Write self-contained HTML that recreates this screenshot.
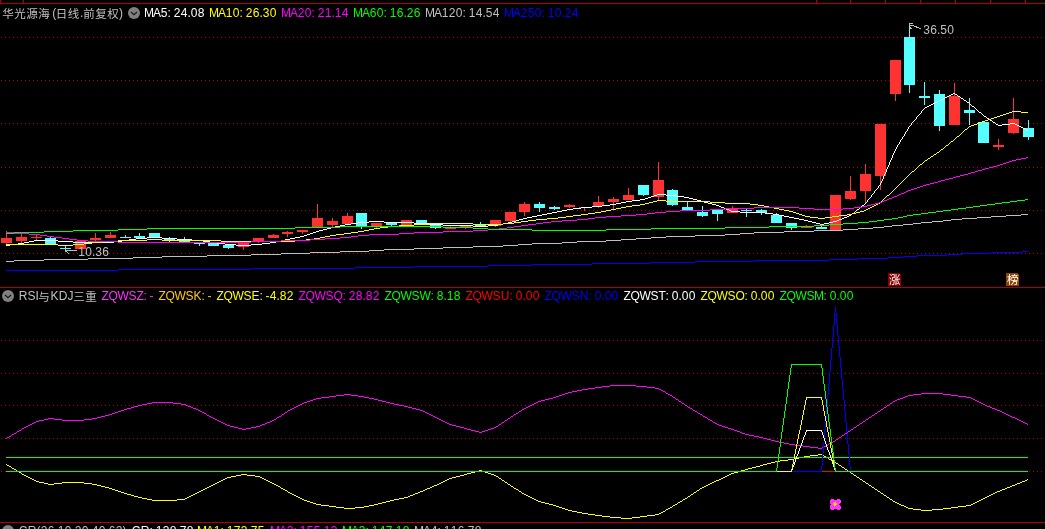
<!DOCTYPE html>
<html lang="zh-CN">
<head>
<meta charset="utf-8">
<title>华光源海 日线</title>
<style>
html,body{margin:0;padding:0;background:#000;}
body{width:1045px;height:529px;overflow:hidden;}
svg{display:block;}
.t{font-family:"Liberation Sans","Noto Sans CJK SC",sans-serif;font-size:12px;}
</style>
</head>
<body>
<svg width="1045" height="529" viewBox="0 0 1045 529" shape-rendering="crispEdges">
<rect width="1045" height="529" fill="#000"/>
<rect x="0" y="3" width="1045" height="1" fill="#b00000"/>
<rect x="0" y="0" width="1" height="3" fill="#b00000"/>
<rect x="23" y="0" width="1" height="3" fill="#b00000"/>
<rect x="816" y="0" width="1" height="3" fill="#b00000"/>
<rect x="850" y="0" width="1" height="3" fill="#b00000"/>
<rect x="885" y="0" width="1" height="3" fill="#b00000"/>
<rect x="920" y="0" width="1" height="3" fill="#b00000"/>
<rect x="955" y="0" width="1" height="3" fill="#b00000"/>
<rect x="990" y="0" width="1" height="3" fill="#b00000"/>
<rect x="1025" y="0" width="1" height="3" fill="#b00000"/>
<rect x="0" y="287" width="1045" height="1" fill="#b00000"/>
<rect x="0" y="522" width="1045" height="1" fill="#b00000"/>
<line x1="1" y1="37.5" x2="1045" y2="37.5" stroke="#b00000" stroke-width="1" stroke-dasharray="1 3"/>
<line x1="1" y1="80.5" x2="1045" y2="80.5" stroke="#b00000" stroke-width="1" stroke-dasharray="1 3"/>
<line x1="1" y1="123.5" x2="1045" y2="123.5" stroke="#b00000" stroke-width="1" stroke-dasharray="1 3"/>
<line x1="1" y1="167.5" x2="1045" y2="167.5" stroke="#b00000" stroke-width="1" stroke-dasharray="1 3"/>
<line x1="1" y1="210.5" x2="1045" y2="210.5" stroke="#b00000" stroke-width="1" stroke-dasharray="1 3"/>
<line x1="1" y1="253.5" x2="1045" y2="253.5" stroke="#b00000" stroke-width="1" stroke-dasharray="1 3"/>
<line x1="1" y1="340.5" x2="1045" y2="340.5" stroke="#b00000" stroke-width="1" stroke-dasharray="1 3"/>
<line x1="1" y1="373.5" x2="1045" y2="373.5" stroke="#b00000" stroke-width="1" stroke-dasharray="1 3"/>
<line x1="1" y1="405.5" x2="1045" y2="405.5" stroke="#b00000" stroke-width="1" stroke-dasharray="1 3"/>
<line x1="1" y1="438.5" x2="1045" y2="438.5" stroke="#b00000" stroke-width="1" stroke-dasharray="1 3"/>
<line x1="1" y1="471.5" x2="1045" y2="471.5" stroke="#b00000" stroke-width="1" stroke-dasharray="1 3"/>
<rect x="6" y="231" width="1" height="13" fill="#ff3232"/>
<rect x="1" y="238" width="11" height="5" fill="#ff3232"/>
<rect x="21" y="234" width="1" height="9" fill="#ff3232"/>
<rect x="16" y="237" width="11" height="4" fill="#ff3232"/>
<rect x="36" y="235" width="1" height="5" fill="#ff3232"/>
<rect x="31" y="237" width="11" height="1" fill="#ff3232"/>
<rect x="50" y="237" width="1" height="7" fill="#54ffff"/>
<rect x="45" y="238" width="11" height="6" fill="#54ffff"/>
<rect x="65" y="246" width="1" height="4" fill="#54ffff"/>
<rect x="60" y="248" width="11" height="1" fill="#54ffff"/>
<rect x="80" y="241" width="1" height="8" fill="#ff3232"/>
<rect x="75" y="241" width="11" height="8" fill="#ff3232"/>
<rect x="95" y="233" width="1" height="8" fill="#ff3232"/>
<rect x="90" y="238" width="11" height="2" fill="#ff3232"/>
<rect x="110" y="232" width="1" height="6" fill="#ff3232"/>
<rect x="105" y="235" width="11" height="3" fill="#ff3232"/>
<rect x="125" y="235" width="1" height="3" fill="#54ffff"/>
<rect x="120" y="237" width="11" height="1" fill="#54ffff"/>
<rect x="139" y="233" width="1" height="5" fill="#54ffff"/>
<rect x="134" y="236" width="11" height="2" fill="#54ffff"/>
<rect x="154" y="233" width="1" height="4" fill="#54ffff"/>
<rect x="149" y="233" width="11" height="4" fill="#54ffff"/>
<rect x="169" y="237" width="1" height="5" fill="#54ffff"/>
<rect x="164" y="239" width="11" height="2" fill="#54ffff"/>
<rect x="184" y="237" width="1" height="5" fill="#54ffff"/>
<rect x="179" y="240" width="11" height="2" fill="#54ffff"/>
<rect x="199" y="243" width="1" height="3" fill="#54ffff"/>
<rect x="194" y="243" width="11" height="1" fill="#54ffff"/>
<rect x="213" y="243" width="1" height="3" fill="#54ffff"/>
<rect x="208" y="243" width="11" height="3" fill="#54ffff"/>
<rect x="228" y="245" width="1" height="4" fill="#54ffff"/>
<rect x="223" y="245" width="11" height="3" fill="#54ffff"/>
<rect x="243" y="243" width="1" height="7" fill="#ff3232"/>
<rect x="238" y="243" width="11" height="4" fill="#ff3232"/>
<rect x="258" y="238" width="1" height="5" fill="#ff3232"/>
<rect x="253" y="238" width="11" height="3" fill="#ff3232"/>
<rect x="273" y="234" width="1" height="4" fill="#ff3232"/>
<rect x="268" y="235" width="11" height="3" fill="#ff3232"/>
<rect x="287" y="231" width="1" height="6" fill="#ff3232"/>
<rect x="282" y="232" width="11" height="2" fill="#ff3232"/>
<rect x="302" y="230" width="1" height="4" fill="#ff3232"/>
<rect x="297" y="230" width="11" height="2" fill="#ff3232"/>
<rect x="317" y="204" width="1" height="23" fill="#ff3232"/>
<rect x="312" y="218" width="11" height="9" fill="#ff3232"/>
<rect x="332" y="218" width="1" height="9" fill="#ff3232"/>
<rect x="327" y="221" width="11" height="4" fill="#ff3232"/>
<rect x="347" y="213" width="1" height="11" fill="#ff3232"/>
<rect x="342" y="216" width="11" height="8" fill="#ff3232"/>
<rect x="361" y="213" width="1" height="16" fill="#54ffff"/>
<rect x="356" y="213" width="11" height="13" fill="#54ffff"/>
<rect x="376" y="223" width="1" height="5" fill="#ff3232"/>
<rect x="371" y="223" width="11" height="3" fill="#ff3232"/>
<rect x="391" y="222" width="1" height="4" fill="#54ffff"/>
<rect x="386" y="222" width="11" height="3" fill="#54ffff"/>
<rect x="406" y="220" width="1" height="5" fill="#ff3232"/>
<rect x="401" y="220" width="11" height="5" fill="#ff3232"/>
<rect x="421" y="220" width="1" height="3" fill="#54ffff"/>
<rect x="416" y="220" width="11" height="3" fill="#54ffff"/>
<rect x="435" y="224" width="1" height="5" fill="#54ffff"/>
<rect x="430" y="224" width="11" height="4" fill="#54ffff"/>
<rect x="450" y="226" width="1" height="3" fill="#ff3232"/>
<rect x="445" y="228" width="11" height="1" fill="#ff3232"/>
<rect x="465" y="225" width="1" height="4" fill="#ff3232"/>
<rect x="460" y="225" width="11" height="2" fill="#ff3232"/>
<rect x="480" y="222" width="1" height="4" fill="#54ffff"/>
<rect x="475" y="225" width="11" height="1" fill="#54ffff"/>
<rect x="495" y="220" width="1" height="7" fill="#ff3232"/>
<rect x="490" y="220" width="11" height="6" fill="#ff3232"/>
<rect x="510" y="212" width="1" height="10" fill="#ff3232"/>
<rect x="505" y="212" width="11" height="9" fill="#ff3232"/>
<rect x="524" y="202" width="1" height="14" fill="#ff3232"/>
<rect x="519" y="204" width="11" height="8" fill="#ff3232"/>
<rect x="539" y="202" width="1" height="10" fill="#54ffff"/>
<rect x="534" y="204" width="11" height="4" fill="#54ffff"/>
<rect x="554" y="206" width="1" height="4" fill="#54ffff"/>
<rect x="549" y="207" width="11" height="2" fill="#54ffff"/>
<rect x="569" y="204" width="1" height="4" fill="#ff3232"/>
<rect x="564" y="205" width="11" height="2" fill="#ff3232"/>
<rect x="584" y="207" width="1" height="4" fill="#ff3232"/>
<rect x="579" y="207" width="11" height="1" fill="#ff3232"/>
<rect x="598" y="196" width="1" height="12" fill="#ff3232"/>
<rect x="593" y="202" width="11" height="4" fill="#ff3232"/>
<rect x="613" y="197" width="1" height="13" fill="#ff3232"/>
<rect x="608" y="199" width="11" height="3" fill="#ff3232"/>
<rect x="628" y="188" width="1" height="12" fill="#ff3232"/>
<rect x="623" y="195" width="11" height="5" fill="#ff3232"/>
<rect x="643" y="185" width="1" height="11" fill="#54ffff"/>
<rect x="638" y="185" width="11" height="10" fill="#54ffff"/>
<rect x="658" y="162" width="1" height="38" fill="#ff3232"/>
<rect x="653" y="180" width="11" height="17" fill="#ff3232"/>
<rect x="672" y="189" width="1" height="17" fill="#54ffff"/>
<rect x="667" y="190" width="11" height="15" fill="#54ffff"/>
<rect x="687" y="202" width="1" height="8" fill="#54ffff"/>
<rect x="682" y="207" width="11" height="3" fill="#54ffff"/>
<rect x="702" y="206" width="1" height="11" fill="#54ffff"/>
<rect x="697" y="212" width="11" height="4" fill="#54ffff"/>
<rect x="717" y="210" width="1" height="11" fill="#54ffff"/>
<rect x="712" y="210" width="11" height="4" fill="#54ffff"/>
<rect x="732" y="206" width="1" height="7" fill="#ff3232"/>
<rect x="727" y="209" width="11" height="4" fill="#ff3232"/>
<rect x="746" y="209" width="1" height="8" fill="#54ffff"/>
<rect x="741" y="210" width="11" height="1" fill="#54ffff"/>
<rect x="761" y="209" width="1" height="6" fill="#54ffff"/>
<rect x="756" y="210" width="11" height="3" fill="#54ffff"/>
<rect x="776" y="213" width="1" height="10" fill="#54ffff"/>
<rect x="771" y="215" width="11" height="8" fill="#54ffff"/>
<rect x="791" y="223" width="1" height="7" fill="#54ffff"/>
<rect x="786" y="223" width="11" height="5" fill="#54ffff"/>
<rect x="806" y="225" width="1" height="3" fill="#ff3232"/>
<rect x="801" y="227" width="11" height="1" fill="#ff3232"/>
<rect x="821" y="225" width="1" height="4" fill="#54ffff"/>
<rect x="816" y="227" width="11" height="2" fill="#54ffff"/>
<rect x="835" y="195" width="1" height="35" fill="#ff3232"/>
<rect x="830" y="195" width="11" height="35" fill="#ff3232"/>
<rect x="850" y="176" width="1" height="24" fill="#ff3232"/>
<rect x="845" y="191" width="11" height="8" fill="#ff3232"/>
<rect x="865" y="164" width="1" height="39" fill="#ff3232"/>
<rect x="860" y="174" width="11" height="17" fill="#ff3232"/>
<rect x="880" y="124" width="1" height="66" fill="#ff3232"/>
<rect x="875" y="124" width="11" height="52" fill="#ff3232"/>
<rect x="895" y="60" width="1" height="41" fill="#ff3232"/>
<rect x="890" y="60" width="11" height="34" fill="#ff3232"/>
<rect x="909" y="27" width="1" height="66" fill="#54ffff"/>
<rect x="904" y="37" width="11" height="48" fill="#54ffff"/>
<rect x="924" y="82" width="1" height="23" fill="#54ffff"/>
<rect x="919" y="96" width="11" height="2" fill="#54ffff"/>
<rect x="939" y="90" width="1" height="41" fill="#54ffff"/>
<rect x="934" y="94" width="11" height="32" fill="#54ffff"/>
<rect x="954" y="83" width="1" height="42" fill="#ff3232"/>
<rect x="949" y="96" width="11" height="29" fill="#ff3232"/>
<rect x="969" y="98" width="1" height="27" fill="#54ffff"/>
<rect x="964" y="110" width="11" height="3" fill="#54ffff"/>
<rect x="983" y="122" width="1" height="21" fill="#54ffff"/>
<rect x="978" y="122" width="11" height="21" fill="#54ffff"/>
<rect x="998" y="139" width="1" height="11" fill="#ff3232"/>
<rect x="993" y="145" width="11" height="2" fill="#ff3232"/>
<rect x="1013" y="98" width="1" height="36" fill="#ff3232"/>
<rect x="1008" y="119" width="11" height="14" fill="#ff3232"/>
<rect x="1028" y="120" width="1" height="20" fill="#54ffff"/>
<rect x="1023" y="128" width="11" height="9" fill="#54ffff"/>
<path d="M6 245.5h4M10 244.5h8M18 243.5h6M24 242.5h5M29 241.5h5M34 240.5h24M58 241.5h15M73 242.5h41M114 241.5h8M122 240.5h7M129 239.5h7M136 238.5h11M147 237.5h15M162 238.5h15M177 239.5h15M192 240.5h11M203 241.5h7M210 242.5h7M217 243.5h8M225 244.5h11M236 245.5h15M251 244.5h11M262 243.5h8M270 242.5h6M276 241.5h5M281 240.5h4M285 239.5h5M290 238.5h5M295 237.5h5M300 236.5h4M304 235.5h3M307 234.5h3M310 233.5h3M313 232.5h3M316 231.5h3M319 230.5h4M323 229.5h4M327 228.5h4M331 227.5h4M335 226.5h5M340 225.5h5M345 224.5h6M351 223.5h7M358 222.5h11M369 221.5h15M384 222.5h30M414 223.5h15M429 224.5h14M443 225.5h30M473 226.5h15M488 225.5h10M498 224.5h5M503 223.5h5M508 222.5h4M512 221.5h4M516 220.5h3M519 219.5h4M523 218.5h4M527 217.5h5M532 216.5h5M537 215.5h5M542 214.5h5M547 213.5h5M552 212.5h5M557 211.5h5M562 210.5h5M567 209.5h6M573 208.5h8M581 207.5h11M592 206.5h10M602 205.5h8M610 204.5h6M616 203.5h5M621 202.5h5M626 201.5h6M632 200.5h8M640 199.5h5M645 198.5h3M648 197.5h3M651 196.5h3M654 195.5h3M657 194.5h9M666 195.5h10M676 196.5h8M684 197.5h5M689 198.5h4M693 199.5h4M697 200.5h4M701 201.5h3M704 202.5h4M708 203.5h4M712 204.5h4M716 205.5h3M719 206.5h2M721 207.5h3M724 208.5h2M726 209.5h3M729 210.5h2M731 211.5h9M740 212.5h25M765 213.5h8M773 214.5h6M779 215.5h5M784 216.5h5M789 217.5h5M794 218.5h5M799 219.5h5M804 220.5h4M808 221.5h4M812 222.5h4M816 223.5h4M820 224.5h4M824 223.5h5M829 222.5h4M833 221.5h4M837 220.5h2M839 219.5h3M842 218.5h2M844 217.5h3M847 216.5h2M849 215.5h2M852 213.5h2M857 209.5h2M862 205.5h2M925 107.5h2M927 106.5h2M929 105.5h2M931 104.5h2M933 103.5h2M935 102.5h2M937 101.5h2M939 100.5h2M941 99.5h2M943 98.5h2M945 97.5h2M947 96.5h2M949 95.5h2M951 94.5h2M953 93.5h2M955 94.5h2M958 96.5h2M961 98.5h2M964 100.5h2M967 102.5h2M972 106.5h2M979 112.5h2M984 116.5h2M987 118.5h2M990 120.5h2M993 122.5h2M996 124.5h2M998 125.5h4M1002 124.5h8M1010 123.5h5M1015 124.5h2M1017 125.5h2M1019 126.5h2M1021 127.5h2M1023 128.5h2M1025 129.5h2M851.5 214v1M854.5 212v1M855.5 211v1M856.5 210v1M859.5 208v1M860.5 207v1M861.5 206v1M864.5 204v1M865.5 203v1M866.5 202v1M867.5 200v2M868.5 199v1M869.5 198v1M870.5 197v1M871.5 195v2M872.5 194v1M873.5 193v1M874.5 191v2M875.5 190v1M876.5 189v1M877.5 188v1M878.5 186v2M879.5 185v1M880.5 183v2M881.5 181v2M882.5 179v2M883.5 176v3M884.5 174v2M885.5 172v2M886.5 169v3M887.5 167v2M888.5 165v2M889.5 162v3M890.5 160v2M891.5 158v2M892.5 155v3M893.5 153v2M894.5 151v2M895.5 149v2M896.5 147v2M897.5 145v2M898.5 144v1M899.5 142v2M900.5 140v2M901.5 139v1M902.5 137v2M903.5 136v1M904.5 134v2M905.5 132v2M906.5 131v1M907.5 129v2M908.5 127v2M909.5 126v1M910.5 125v1M911.5 123v2M912.5 122v1M913.5 121v1M914.5 120v1M915.5 119v1M916.5 117v2M917.5 116v1M918.5 115v1M919.5 114v1M920.5 113v1M921.5 111v2M922.5 110v1M923.5 109v1M924.5 108v1M957.5 95v1M960.5 97v1M963.5 99v1M966.5 101v1M969.5 103v1M970.5 104v1M971.5 105v1M974.5 107v1M975.5 108v1M976.5 109v1M977.5 110v1M978.5 111v1M981.5 113v1M982.5 114v1M983.5 115v1M986.5 117v1M989.5 119v1M992.5 121v1M995.5 123v1M1027.5 130v1" fill="none" stroke="#ffffff" stroke-width="1"/>
<path d="M6 244.5h52M58 245.5h15M73 244.5h11M84 243.5h8M92 242.5h11M103 241.5h15M118 240.5h29M147 239.5h15M162 240.5h59M221 241.5h74M295 240.5h11M306 239.5h8M314 238.5h6M320 237.5h5M325 236.5h5M330 235.5h6M336 234.5h8M344 233.5h7M351 232.5h7M358 231.5h6M364 230.5h5M369 229.5h5M374 228.5h6M380 227.5h8M388 226.5h11M399 225.5h15M414 224.5h15M429 223.5h44M473 224.5h30M503 223.5h11M514 222.5h7M521 221.5h7M528 220.5h8M536 219.5h11M547 218.5h11M558 217.5h8M566 216.5h7M573 215.5h8M581 214.5h7M588 213.5h7M595 212.5h6M601 211.5h5M606 210.5h5M611 209.5h5M616 208.5h5M621 207.5h5M626 206.5h6M632 205.5h8M640 204.5h5M645 203.5h4M649 202.5h4M653 201.5h4M657 200.5h9M666 201.5h44M710 202.5h15M725 203.5h25M750 204.5h8M758 205.5h6M764 206.5h5M769 207.5h5M774 208.5h5M779 209.5h5M784 210.5h5M789 211.5h4M793 212.5h3M796 213.5h3M799 214.5h3M802 215.5h3M805 216.5h5M810 217.5h8M818 218.5h7M825 217.5h7M832 216.5h7M839 215.5h8M847 214.5h5M852 213.5h4M856 212.5h4M860 211.5h4M864 210.5h2M866 209.5h2M868 208.5h2M870 207.5h2M872 206.5h2M874 205.5h2M876 204.5h2M878 203.5h2M887 195.5h2M912 171.5h2M920 164.5h2M925 160.5h2M928 158.5h2M931 156.5h2M934 154.5h2M937 152.5h2M941 149.5h2M946 145.5h2M951 141.5h2M957 136.5h2M965 129.5h2M969 126.5h2M971 125.5h3M974 124.5h3M977 123.5h2M979 122.5h3M982 121.5h3M985 120.5h3M988 119.5h3M991 118.5h3M994 117.5h3M997 116.5h3M1000 115.5h3M1003 114.5h3M1006 113.5h3M1009 112.5h3M1012 111.5h9M1021 112.5h7M880.5 202v1M881.5 201v1M882.5 200v1M883.5 199v1M884.5 198v1M885.5 197v1M886.5 196v1M889.5 194v1M890.5 193v1M891.5 192v1M892.5 191v1M893.5 190v1M894.5 189v1M895.5 188v1M896.5 187v1M897.5 186v1M898.5 185v1M899.5 184v1M900.5 183v1M901.5 182v1M902.5 181v1M903.5 180v1M904.5 179v1M905.5 178v1M906.5 177v1M907.5 176v1M908.5 175v1M909.5 174v1M910.5 173v1M911.5 172v1M914.5 170v1M915.5 169v1M916.5 168v1M917.5 167v1M918.5 166v1M919.5 165v1M922.5 163v1M923.5 162v1M924.5 161v1M927.5 159v1M930.5 157v1M933.5 155v1M936.5 153v1M939.5 151v1M940.5 150v1M943.5 148v1M944.5 147v1M945.5 146v1M948.5 144v1M949.5 143v1M950.5 142v1M953.5 140v1M954.5 139v1M955.5 138v1M956.5 137v1M959.5 135v1M960.5 134v1M961.5 133v1M962.5 132v1M963.5 131v1M964.5 130v1M967.5 128v1M968.5 127v1" fill="none" stroke="#ffff00" stroke-width="1"/>
<path d="M6 232.5h8M14 233.5h15M29 234.5h11M40 235.5h7M47 236.5h7M54 237.5h8M62 238.5h7M69 239.5h8M77 240.5h11M88 241.5h30M118 242.5h133M251 241.5h30M281 240.5h29M310 239.5h15M325 238.5h15M340 237.5h11M351 236.5h7M358 235.5h11M369 234.5h30M399 233.5h15M414 232.5h29M443 231.5h30M473 230.5h15M488 229.5h11M499 228.5h8M507 227.5h7M514 226.5h7M521 225.5h7M528 224.5h8M536 223.5h7M543 222.5h8M551 221.5h11M562 220.5h15M577 219.5h11M588 218.5h7M595 217.5h11M606 216.5h15M621 215.5h15M636 214.5h11M647 213.5h8M655 212.5h11M666 211.5h14M680 210.5h30M710 209.5h15M725 208.5h29M754 207.5h45M799 208.5h15M814 209.5h29M843 208.5h11M854 207.5h8M862 206.5h5M867 205.5h4M871 204.5h4M875 203.5h4M879 202.5h3M882 201.5h2M884 200.5h3M887 199.5h2M889 198.5h3M892 197.5h2M894 196.5h3M897 195.5h2M899 194.5h2M901 193.5h3M904 192.5h2M906 191.5h2M908 190.5h3M911 189.5h3M914 188.5h3M917 187.5h3M920 186.5h3M923 185.5h3M926 184.5h4M930 183.5h4M934 182.5h4M938 181.5h3M941 180.5h4M945 179.5h4M949 178.5h4M953 177.5h3M956 176.5h4M960 175.5h4M964 174.5h4M968 173.5h3M971 172.5h4M975 171.5h3M978 170.5h4M982 169.5h3M985 168.5h4M989 167.5h4M993 166.5h4M997 165.5h3M1000 164.5h3M1003 163.5h3M1006 162.5h3M1009 161.5h3M1012 160.5h4M1016 159.5h5M1021 158.5h5M1026 157.5h2" fill="none" stroke="#ff00ff" stroke-width="1"/>
<path d="M6 233.5h8M14 232.5h30M44 231.5h29M73 230.5h45M118 229.5h29M147 228.5h148M295 227.5h45M340 226.5h103M443 227.5h30M473 228.5h15M488 229.5h44M532 230.5h74M606 229.5h45M651 228.5h74M725 227.5h44M769 226.5h45M814 225.5h15M829 224.5h14M843 223.5h15M858 222.5h11M869 221.5h8M877 220.5h7M884 219.5h8M892 218.5h6M898 217.5h5M903 216.5h4M907 215.5h6M913 214.5h8M921 213.5h7M928 212.5h8M936 211.5h7M943 210.5h8M951 209.5h7M958 208.5h8M966 207.5h7M973 206.5h7M980 205.5h7M987 204.5h8M995 203.5h7M1002 202.5h8M1010 201.5h7M1017 200.5h8M1025 199.5h3" fill="none" stroke="#00ff00" stroke-width="1"/>
<path d="M6 261.5h8M14 260.5h30M44 259.5h44M88 258.5h45M133 257.5h29M162 256.5h45M207 255.5h44M251 254.5h30M281 253.5h29M310 252.5h30M340 251.5h29M369 250.5h15M384 249.5h30M414 248.5h29M443 247.5h30M473 246.5h30M503 245.5h15M518 244.5h14M532 243.5h30M562 242.5h15M577 241.5h29M606 240.5h15M621 239.5h15M636 238.5h15M651 237.5h15M666 236.5h29M695 235.5h30M725 234.5h15M740 233.5h14M754 232.5h30M784 231.5h30M814 230.5h29M843 229.5h15M858 228.5h15M873 227.5h11M884 226.5h8M892 225.5h11M903 224.5h10M913 223.5h8M921 222.5h11M932 221.5h11M943 220.5h8M951 219.5h11M962 218.5h15M977 217.5h14M991 216.5h15M1006 215.5h15M1021 214.5h7" fill="none" stroke="#c0c0c0" stroke-width="1"/>
<path d="M6 270.5h112M118 269.5h133M251 268.5h104M355 267.5h59M414 266.5h74M488 265.5h44M532 264.5h60M592 263.5h59M651 262.5h44M695 261.5h59M754 260.5h75M829 259.5h29M858 258.5h30M888 257.5h15M903 256.5h14M917 255.5h30M947 254.5h15M962 253.5h29M991 252.5h30M1021 251.5h7" fill="none" stroke="#0000ff" stroke-width="1"/>
<path d="M7 465.5h2M9 466.5h2M12 468.5h2M14 469.5h2M17 471.5h2M19 472.5h2M22 474.5h2M24 475.5h2M26 476.5h2M28 477.5h2M30 478.5h2M32 479.5h2M34 480.5h2M36 481.5h3M39 482.5h5M44 483.5h4M48 484.5h6M54 483.5h8M62 482.5h22M84 483.5h8M92 484.5h5M97 485.5h4M101 486.5h4M105 487.5h4M109 488.5h3M112 489.5h3M115 490.5h3M118 491.5h3M121 492.5h3M124 493.5h3M127 494.5h4M131 495.5h3M134 496.5h4M138 497.5h4M142 498.5h5M147 499.5h5M152 500.5h25M177 499.5h8M185 498.5h2M187 497.5h2M189 496.5h2M191 495.5h2M193 494.5h2M195 493.5h2M197 492.5h2M199 491.5h2M201 490.5h2M203 489.5h2M205 488.5h2M207 487.5h2M209 486.5h2M211 485.5h2M213 484.5h2M215 483.5h2M217 482.5h2M219 481.5h2M221 480.5h2M223 479.5h2M225 478.5h2M227 477.5h4M231 476.5h5M236 475.5h5M241 474.5h6M247 475.5h8M255 476.5h5M260 477.5h2M262 478.5h2M264 479.5h2M266 480.5h2M268 481.5h2M270 482.5h2M272 483.5h2M274 484.5h2M276 485.5h2M278 486.5h2M281 488.5h2M283 489.5h2M285 490.5h2M288 492.5h2M290 493.5h2M292 494.5h2M294 495.5h2M296 496.5h2M298 497.5h2M300 498.5h2M302 499.5h2M304 500.5h3M307 501.5h3M310 502.5h3M313 503.5h3M316 504.5h5M321 505.5h8M329 506.5h7M336 507.5h8M344 508.5h11M355 507.5h9M364 506.5h5M369 505.5h5M374 504.5h4M378 503.5h4M382 502.5h4M386 501.5h4M390 500.5h4M394 499.5h5M399 498.5h5M404 497.5h4M408 496.5h2M410 495.5h3M413 494.5h2M415 493.5h3M418 492.5h2M420 491.5h3M423 490.5h2M425 489.5h2M427 488.5h3M430 487.5h2M432 486.5h2M434 485.5h3M437 484.5h2M439 483.5h2M441 482.5h2M443 481.5h2M445 480.5h2M447 479.5h2M449 478.5h3M452 477.5h4M456 476.5h4M460 475.5h4M464 474.5h3M467 473.5h4M471 472.5h4M475 471.5h4M479 470.5h3M482 471.5h3M485 472.5h3M488 473.5h3M491 474.5h3M494 475.5h2M496 476.5h2M499 478.5h2M502 480.5h2M505 482.5h2M508 484.5h2M511 486.5h2M514 488.5h2M516 489.5h2M519 491.5h2M522 493.5h2M524 494.5h2M526 495.5h2M528 496.5h2M530 497.5h2M532 498.5h2M534 499.5h2M536 500.5h2M538 501.5h3M541 502.5h4M545 503.5h4M549 504.5h4M553 505.5h3M556 506.5h3M559 507.5h3M562 508.5h3M565 509.5h3M568 510.5h4M572 511.5h5M577 512.5h5M582 513.5h6M588 514.5h7M595 515.5h7M602 516.5h8M610 517.5h11M621 518.5h11M632 517.5h8M640 516.5h7M647 515.5h8M655 514.5h4M659 513.5h2M661 512.5h2M663 511.5h2M666 509.5h2M668 508.5h2M670 507.5h2M673 505.5h2M675 504.5h2M678 502.5h2M680 501.5h2M683 499.5h2M685 498.5h2M688 496.5h2M691 494.5h2M694 492.5h2M697 490.5h2M700 488.5h2M702 487.5h2M704 486.5h2M706 485.5h2M708 484.5h2M710 483.5h2M712 482.5h2M714 481.5h2M716 480.5h3M719 479.5h2M721 478.5h2M723 477.5h2M725 476.5h2M727 475.5h2M729 474.5h2M731 473.5h3M734 472.5h4M738 471.5h3M741 470.5h4M745 469.5h3M748 468.5h4M752 467.5h4M756 466.5h4M760 465.5h3M763 464.5h4M767 463.5h4M771 462.5h4M775 461.5h5M780 460.5h8M788 459.5h6M794 458.5h5M799 457.5h5M804 456.5h6M810 455.5h8M818 454.5h4M822 455.5h2M824 456.5h2M826 457.5h2M829 459.5h2M831 460.5h2M833 461.5h2M836 463.5h2M839 465.5h2M842 467.5h2M845 469.5h2M848 471.5h2M851 473.5h2M854 475.5h2M857 477.5h2M860 479.5h2M863 481.5h2M866 483.5h2M869 485.5h2M872 487.5h2M875 489.5h2M878 491.5h2M881 493.5h2M884 495.5h2M887 497.5h2M890 499.5h2M893 501.5h2M895 502.5h2M897 503.5h2M899 504.5h2M901 505.5h3M904 506.5h2M906 507.5h2M908 508.5h5M913 509.5h8M921 510.5h11M932 509.5h11M943 508.5h8M951 507.5h7M958 506.5h8M966 505.5h5M971 504.5h2M973 503.5h2M975 502.5h2M977 501.5h2M979 500.5h2M981 499.5h2M983 498.5h2M985 497.5h2M987 496.5h2M989 495.5h2M991 494.5h2M993 493.5h2M995 492.5h2M997 491.5h3M1000 490.5h2M1002 489.5h3M1005 488.5h2M1007 487.5h3M1010 486.5h2M1012 485.5h3M1015 484.5h2M1017 483.5h3M1020 482.5h2M1022 481.5h3M1025 480.5h2M6.5 464v1M11.5 467v1M16.5 470v1M21.5 473v1M280.5 487v1M287.5 491v1M498.5 477v1M501.5 479v1M504.5 481v1M507.5 483v1M510.5 485v1M513.5 487v1M518.5 490v1M521.5 492v1M665.5 510v1M672.5 506v1M677.5 503v1M682.5 500v1M687.5 497v1M690.5 495v1M693.5 493v1M696.5 491v1M699.5 489v1M828.5 458v1M835.5 462v1M838.5 464v1M841.5 466v1M844.5 468v1M847.5 470v1M850.5 472v1M853.5 474v1M856.5 476v1M859.5 478v1M862.5 480v1M865.5 482v1M868.5 484v1M871.5 486v1M874.5 488v1M877.5 490v1M880.5 492v1M883.5 494v1M886.5 496v1M889.5 498v1M892.5 500v1M1027.5 479v1" fill="none" stroke="#ffff00" stroke-width="1"/>
<path d="M7 437.5h2M9 436.5h2M12 434.5h2M14 433.5h2M17 431.5h2M19 430.5h2M22 428.5h2M24 427.5h2M26 426.5h2M28 425.5h2M30 424.5h2M32 423.5h2M34 422.5h2M36 421.5h3M39 420.5h5M44 419.5h4M48 418.5h6M54 419.5h8M62 420.5h22M84 419.5h8M92 418.5h5M97 417.5h4M101 416.5h4M105 415.5h4M109 414.5h3M112 413.5h3M115 412.5h3M118 411.5h3M121 410.5h3M124 409.5h3M127 408.5h4M131 407.5h3M134 406.5h4M138 405.5h4M142 404.5h5M147 403.5h5M152 402.5h21M173 403.5h8M181 404.5h5M186 405.5h2M188 406.5h3M191 407.5h2M193 408.5h3M196 409.5h2M198 410.5h2M200 411.5h2M202 412.5h2M204 413.5h2M207 415.5h2M209 416.5h2M211 417.5h2M213 418.5h2M215 419.5h2M217 420.5h2M219 421.5h2M221 422.5h2M223 423.5h2M225 424.5h2M227 425.5h3M230 426.5h4M234 427.5h4M238 428.5h4M242 429.5h4M246 428.5h5M251 427.5h5M256 426.5h4M260 425.5h2M262 424.5h3M265 423.5h2M267 422.5h3M270 421.5h2M272 420.5h2M274 419.5h2M277 417.5h2M279 416.5h2M282 414.5h2M285 412.5h2M288 410.5h2M290 409.5h2M292 408.5h2M294 407.5h2M296 406.5h2M298 405.5h2M300 404.5h2M302 403.5h2M304 402.5h3M307 401.5h3M310 400.5h3M313 399.5h3M316 398.5h5M321 397.5h8M329 396.5h7M336 395.5h8M344 394.5h7M351 395.5h7M358 396.5h6M364 397.5h5M369 398.5h5M374 399.5h4M378 400.5h4M382 401.5h4M386 402.5h4M390 403.5h4M394 404.5h5M399 405.5h5M404 406.5h4M408 407.5h4M412 408.5h4M416 409.5h4M420 410.5h3M423 411.5h2M425 412.5h2M427 413.5h2M429 414.5h2M431 415.5h2M433 416.5h2M435 417.5h2M437 418.5h2M439 419.5h2M441 420.5h2M443 421.5h2M445 422.5h2M447 423.5h2M449 424.5h3M452 425.5h4M456 426.5h4M460 427.5h4M464 428.5h3M467 429.5h4M471 430.5h4M475 431.5h4M479 432.5h3M482 431.5h3M485 430.5h3M488 429.5h3M491 428.5h3M494 427.5h2M496 426.5h2M499 424.5h2M502 422.5h2M505 420.5h2M508 418.5h2M511 416.5h2M514 414.5h2M516 413.5h2M519 411.5h2M522 409.5h2M524 408.5h2M526 407.5h2M528 406.5h2M530 405.5h2M532 404.5h2M534 403.5h2M536 402.5h2M538 401.5h3M541 400.5h4M545 399.5h4M549 398.5h4M553 397.5h3M556 396.5h3M559 395.5h3M562 394.5h3M565 393.5h3M568 392.5h4M572 391.5h5M577 390.5h5M582 389.5h6M588 388.5h7M595 387.5h7M602 386.5h8M610 385.5h26M636 386.5h11M647 387.5h8M655 388.5h4M659 389.5h2M661 390.5h2M663 391.5h2M666 393.5h2M668 394.5h2M670 395.5h2M673 397.5h2M676 399.5h2M679 401.5h2M682 403.5h2M685 405.5h2M688 407.5h2M690 408.5h2M693 410.5h2M695 411.5h2M698 413.5h2M700 414.5h2M703 416.5h2M705 417.5h2M708 419.5h2M710 420.5h2M713 422.5h2M715 423.5h2M717 424.5h2M719 425.5h3M722 426.5h3M725 427.5h3M728 428.5h3M731 429.5h3M734 430.5h3M737 431.5h3M740 432.5h2M742 433.5h3M745 434.5h4M749 435.5h5M754 436.5h5M759 437.5h4M763 438.5h4M767 439.5h4M771 440.5h4M775 441.5h4M779 442.5h5M784 443.5h5M789 444.5h6M795 445.5h8M803 446.5h7M810 447.5h8M818 448.5h4M822 447.5h2M824 446.5h2M826 445.5h2M829 443.5h2M831 442.5h2M833 441.5h2M836 439.5h2M839 437.5h2M842 435.5h2M845 433.5h2M848 431.5h2M851 429.5h2M854 427.5h2M857 425.5h2M860 423.5h2M863 421.5h2M866 419.5h2M869 417.5h2M872 415.5h2M875 413.5h2M878 411.5h2M881 409.5h2M884 407.5h2M887 405.5h2M890 403.5h2M893 401.5h2M895 400.5h2M897 399.5h3M900 398.5h3M903 397.5h2M905 396.5h3M908 395.5h5M913 394.5h8M921 393.5h22M943 394.5h8M951 395.5h7M958 396.5h8M966 397.5h5M971 398.5h2M973 399.5h2M975 400.5h2M977 401.5h2M979 402.5h2M981 403.5h2M983 404.5h2M985 405.5h2M987 406.5h3M990 407.5h2M992 408.5h3M995 409.5h2M997 410.5h3M1000 411.5h2M1002 412.5h2M1004 413.5h2M1006 414.5h2M1008 415.5h2M1010 416.5h2M1012 417.5h3M1015 418.5h2M1017 419.5h2M1019 420.5h2M1021 421.5h2M1023 422.5h2M1025 423.5h2M6.5 438v1M11.5 435v1M16.5 432v1M21.5 429v1M206.5 414v1M276.5 418v1M281.5 415v1M284.5 413v1M287.5 411v1M498.5 425v1M501.5 423v1M504.5 421v1M507.5 419v1M510.5 417v1M513.5 415v1M518.5 412v1M521.5 410v1M665.5 392v1M672.5 396v1M675.5 398v1M678.5 400v1M681.5 402v1M684.5 404v1M687.5 406v1M692.5 409v1M697.5 412v1M702.5 415v1M707.5 418v1M712.5 421v1M828.5 444v1M835.5 440v1M838.5 438v1M841.5 436v1M844.5 434v1M847.5 432v1M850.5 430v1M853.5 428v1M856.5 426v1M859.5 424v1M862.5 422v1M865.5 420v1M868.5 418v1M871.5 416v1M874.5 414v1M877.5 412v1M880.5 410v1M883.5 408v1M886.5 406v1M889.5 404v1M892.5 402v1M1027.5 424v1" fill="none" stroke="#ff00ff" stroke-width="1"/>
<rect x="6" y="457" width="1022" height="1" fill="#00ff00"/>
<path d="M6 471.5h1022" fill="none" stroke="#ff0000" stroke-width="1"/>
<path d="M6 471.5h816M850 471.5h178M821.5 466v5M822.5 454v12M823.5 442v12M824.5 430v12M825.5 419v11M826.5 407v12M827.5 395v12M828.5 384v11M829.5 372v12M830.5 360v12M831.5 348v12M832.5 337v11M833.5 325v12M834.5 313v12M835.5 307v6M836.5 313v11M837.5 324v11M838.5 335v11M839.5 346v11M840.5 357v11M841.5 368v11M842.5 379v11M843.5 390v10M844.5 400v11M845.5 411v11M846.5 422v11M847.5 433v11M848.5 444v11M849.5 455v11M850.5 466v5" fill="none" stroke="#0000ff" stroke-width="1"/>
<path d="M6 471.5h786M806 430.5h16M835 471.5h193M791.5 470v1M792.5 467v3M793.5 465v2M794.5 462v3M795.5 459v3M796.5 456v3M797.5 454v2M798.5 451v3M799.5 448v3M800.5 446v2M801.5 443v3M802.5 440v3M803.5 437v3M804.5 435v2M805.5 432v3M806.5 431v1M821.5 431v1M822.5 432v3M823.5 435v3M824.5 438v3M825.5 441v3M826.5 444v3M827.5 447v3M828.5 450v2M829.5 452v3M830.5 455v3M831.5 458v3M832.5 461v3M833.5 464v3M834.5 467v3M835.5 470v1" fill="none" stroke="#ffffff" stroke-width="1"/>
<path d="M6 471.5h786M806 397.5h16M835 471.5h193M791.5 469v2M792.5 464v5M793.5 459v5M794.5 454v5M795.5 449v5M796.5 444v5M797.5 439v5M798.5 434v5M799.5 430v4M800.5 425v5M801.5 420v5M802.5 415v5M803.5 410v5M804.5 405v5M805.5 400v5M806.5 398v2M821.5 398v2M822.5 400v5M823.5 405v6M824.5 411v5M825.5 416v5M826.5 421v6M827.5 427v5M828.5 432v5M829.5 437v5M830.5 442v6M831.5 448v5M832.5 453v5M833.5 458v6M834.5 464v5M835.5 469v2" fill="none" stroke="#ffff00" stroke-width="1"/>
<path d="M6 471.5h771M791 364.5h31M835 471.5h193M776.5 468v3M777.5 461v7M778.5 454v7M779.5 447v7M780.5 439v8M781.5 432v7M782.5 425v7M783.5 418v7M784.5 411v7M785.5 404v7M786.5 397v7M787.5 389v8M788.5 382v7M789.5 375v7M790.5 368v7M791.5 365v3M821.5 365v3M822.5 368v8M823.5 376v8M824.5 384v7M825.5 391v8M826.5 399v8M827.5 407v7M828.5 414v8M829.5 422v7M830.5 429v8M831.5 437v8M832.5 445v7M833.5 452v8M834.5 460v8M835.5 468v3" fill="none" stroke="#00ff00" stroke-width="1"/>
<path d="M831 499h3v1h-3zM837 499h3v1h-3zM830 500h11v1h-11zM830 501h11v1h-11zM830 502h11v1h-11zM830 503h10v1h-10zM831 504h8v1h-8zM830 505h10v1h-10zM830 506h11v1h-11zM830 507h11v1h-11zM830 508h11v1h-11zM831 509h3v1h-3zM837 509h3v1h-3z" fill="#ff32ff"/>
<path d="M834 502h2v1h-2zM833 503h4v2h-4zM834 505h2v1h-2z" fill="#ffcc00"/>
<path d="M888 273H899L901 275V286H888Z" fill="#8b0000"/>
<text x="888.9" y="283.9" fill="#fff" class="t" style="font-size:11.5px;will-change:opacity">涨</text>
<path d="M1006 273H1017L1019 275V286H1006Z" fill="#8b4500"/>
<text x="1006.9" y="283.9" fill="#fff" class="t" style="font-size:11.5px;will-change:opacity">榜</text>
<g stroke="#c0c0c0" stroke-width="1" fill="none">
<path d="M65.5 250.5H77"/><path d="M65.5 248V252"/><path d="M66 251L69 254"/>
<path d="M910 23.5H913"/><path d="M909.5 23V27"/><path d="M909.5 25.5H913L921 29"/><path d="M910 27L911.5 29"/>
</g>
<g shape-rendering="auto"><circle cx="134" cy="13" r="6" fill="#808080"/><path d="M131 12.0L134 14.7L137 12.0" fill="none" stroke="#181818" stroke-width="1.15"/></g>
<g shape-rendering="auto"><circle cx="8" cy="296" r="6" fill="#808080"/><path d="M5 295.0L8 297.7L11 295.0" fill="none" stroke="#181818" stroke-width="1.15"/></g>
<g shape-rendering="auto"><circle cx="8" cy="531" r="6" fill="#808080"/><path d="M5 530.0L8 532.7L11 530.0" fill="none" stroke="#181818" stroke-width="1.15"/></g>
<g style="will-change:opacity">
<text fill="#c0c0c0" class="t"><tspan x="2.3" y="17.8" font-size="11.5">华</tspan><tspan x="14.3" y="17.8" font-size="11.5">光</tspan><tspan x="26.3" y="17.8" font-size="11.5">源</tspan><tspan x="38.3" y="17.8" font-size="11.5">海</tspan><tspan x="52.3" y="17">(</tspan><tspan x="55.8" y="17.8" font-size="11.5">日</tspan><tspan x="67.8" y="17.8" font-size="11.5">线</tspan><tspan x="80" y="17">.</tspan><tspan x="83.3" y="17.8" font-size="11.5">前</tspan><tspan x="95.3" y="17.8" font-size="11.5">复</tspan><tspan x="107.3" y="17.8" font-size="11.5">权</tspan><tspan x="119" y="17">)</tspan></text>
<text x="144.1 153.1 160.76 167.43 170.43 173.76 180.76 187.43 190.76 197.76" y="17" fill="#ffffff" class="t">MA5: 24.08</text>
<text x="209.1 218.1 225.76 232.76 239.43 242.43 245.76 252.76 259.43 262.76 269.76" y="17" fill="#ffff00" class="t">MA10: 26.30</text>
<text x="281.1 290.1 297.76 304.76 311.43 314.43 317.76 324.76 331.43 334.76 341.76" y="17" fill="#ff00ff" class="t">MA20: 21.14</text>
<text x="353.1 362.1 369.76 376.76 383.43 386.43 389.76 396.76 403.43 406.76 413.76" y="17" fill="#00ff00" class="t">MA60: 16.26</text>
<text x="425.1 434.1 441.76 448.76 455.76 462.43 465.43 468.76 475.76 482.43 485.76 492.76" y="17" fill="#c0c0c0" class="t">MA120: 14.54</text>
<text x="504.1 513.1 520.76 527.76 534.76 541.43 544.43 547.76 554.76 561.43 564.76 571.76" y="17" fill="#0000ff" class="t">MA250: 10.24</text>
<text fill="#c0c0c0" class="t"><tspan x="18.77" y="300">R</tspan><tspan x="27.6" y="300">S</tspan><tspan x="35.43" y="300">I</tspan><tspan x="38.3" y="300.8" font-size="11.5">与</tspan><tspan x="50.6" y="300">K</tspan><tspan x="58.77" y="300">D</tspan><tspan x="67.6" y="300">J</tspan><tspan x="73.3" y="300.8" font-size="11.5">三</tspan><tspan x="85.3" y="300.8" font-size="11.5">重</tspan></text>
<text x="101.43 108.43 117.44 128.6 136.43 143.43 146.43 149.6" y="300" fill="#ff32ff" class="t">ZQWSZ: -</text>
<text x="158.43 165.43 174.44 185.6 193.6 201.43 204.43 207.6" y="300" fill="#ffcc00" class="t">ZQWSK: -</text>
<text x="216.43 223.43 232.44 243.6 251.6 259.43 262.43 265.6 269.76 276.43 279.76 286.76" y="300" fill="#ffff00" class="t">ZQWSE: -4.82</text>
<text x="298.43 305.43 314.44 325.6 333.43 342.43 345.43 348.76 355.76 362.43 365.76 372.76" y="300" fill="#ff00ff" class="t">ZQWSQ: 28.82</text>
<text x="384.43 391.43 400.44 411.6 419.44 430.43 433.43 436.76 443.43 446.76 453.76" y="300" fill="#00ff00" class="t">ZQWSW: 8.18</text>
<text x="465.43 472.43 481.44 492.6 500.77 509.43 512.43 515.76 522.43 525.76 532.76" y="300" fill="#ff0000" class="t">ZQWSU: 0.00</text>
<text x="544.43 551.43 560.44 571.6 579.77 588.43 591.43 594.76 601.43 604.76 611.76" y="300" fill="#0000ff" class="t">ZQWSN: 0.00</text>
<text x="623.43 630.43 639.44 650.6 658.43 665.43 668.43 671.76 678.43 681.76 688.76" y="300" fill="#ffffff" class="t">ZQWST: 0.00</text>
<text x="700.43 707.43 716.44 727.6 735.43 744.43 747.43 750.76 757.43 760.76 767.76" y="300" fill="#ffff00" class="t">ZQWSO: 0.00</text>
<text x="779.43 786.43 795.44 806.6 814.1 823.43 826.43 829.76 836.43 839.76 846.76" y="300" fill="#00ff00" class="t">ZQWSM: 0.00</text>
<text x="18.77 27.77 36.6 40.76 47.76 54.43 57.76 64.76 71.43 74.76 81.76 88.43 91.76 98.76 105.43 108.76 115.76 122.6" y="535" fill="#c0c0c0" class="t">CR(26,10,20,40,62)</text>
<text x="131.77 140.77 149.43 152.43 155.76 162.76 169.76 176.43 179.76 186.76" y="535" fill="#ffffff" class="t">CR: 138.78</text>
<text x="197.1 206.1 213.76 220.43 223.43 226.76 233.76 240.76 247.43 250.76 257.76" y="535" fill="#ffff00" class="t">MA1: 173.75</text>
<text x="270.1 279.1 286.76 293.43 296.43 299.76 306.76 313.76 320.43 323.76 330.76" y="535" fill="#ff00ff" class="t">MA2: 155.13</text>
<text x="342.1 351.1 358.76 365.43 368.43 371.76 378.76 385.76 392.43 395.76 402.76" y="535" fill="#00ff00" class="t">MA3: 147.18</text>
<text x="414.1 423.1 430.76 437.43 440.43 443.76 450.76 457.76 464.43 467.76 474.76" y="535" fill="#c0c0c0" class="t">MA4: 116.78</text>
<text x="78.36 85.36 92.03 95.36 102.36" y="256" fill="#c0c0c0" class="t">10.36</text>
<text x="923.36 930.36 937.03 940.36 947.36" y="34" fill="#c0c0c0" class="t">36.50</text>
</g>
</svg>
</body>
</html>
